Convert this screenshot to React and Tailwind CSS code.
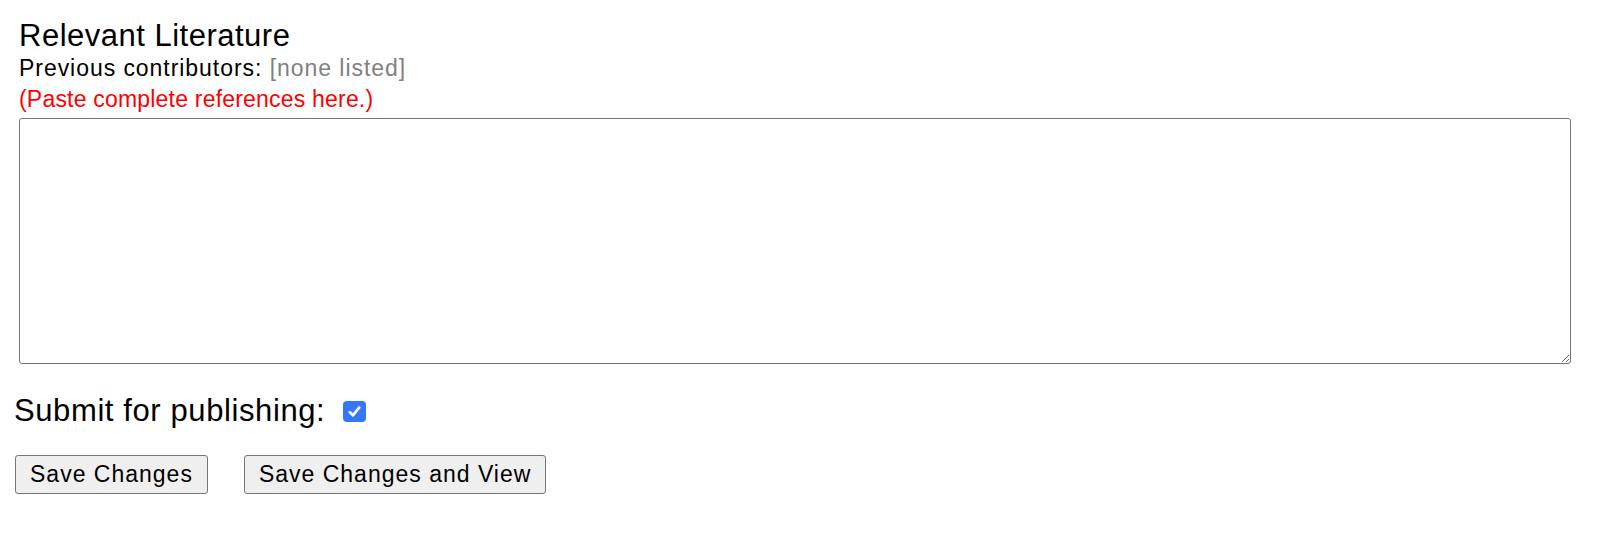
import React from 'react';

const font = { fontFamily: '"Liberation Sans", Arial, sans-serif' };

const CheckBox = () => (
  <span className="ml-[18px] flex h-[21px] w-[23px] items-center justify-center rounded-[4px] bg-[#3478f6]">
    <svg viewBox="0 0 16 16" className="h-[17px] w-[17px]" fill="none">
      <path d="M3.6 8.6l2.9 3 5.9-7.2" stroke="white" strokeWidth="2.6" strokeLinecap="round" strokeLinejoin="round" />
    </svg>
  </span>
);

const FormButton = ({ children }) => (
  <button
    type="button"
    className="h-[39px] rounded-[3px] border border-[#767676] bg-[#efefef] px-[14px] text-[23px] leading-none tracking-[1px] text-black"
  >
    {children}
  </button>
);

export default function App() {
  return (
    <div className="min-h-[548px] bg-white text-black" style={font}>
      {/* Literature section */}
      <div className="pl-[19px] pt-[19px]">
        <h2 className="text-[31px] leading-[33px] font-normal tracking-[0.5px]">Relevant Literature</h2>
        <p className="mt-[4px] text-[23px] leading-[24px] tracking-[0.95px]">
          Previous contributors: <span className="text-[#808080]">[none listed]</span>
        </p>
        <p className="mt-[7px] text-[23px] leading-[24px] tracking-[0.2px] text-[#f00]">(Paste complete references here.)</p>
        <textarea
          className="mt-[7px] block h-[246px] w-[1552px] rounded-[3px] border border-[#767676] bg-white p-[3px] outline-none"
        />
      </div>

      {/* Publish + actions */}
      <div className="px-[14px]">
        <label className="mt-[30px] flex h-[34px] items-center text-[31px] leading-[34px] tracking-[0.6px]">
          Submit for publishing:
          <CheckBox />
        </label>
        <div className="mt-[27px] flex gap-[36px] pl-[1px]">
          <FormButton>Save Changes</FormButton>
          <FormButton>Save Changes and View</FormButton>
        </div>
      </div>
    </div>
  );
}
